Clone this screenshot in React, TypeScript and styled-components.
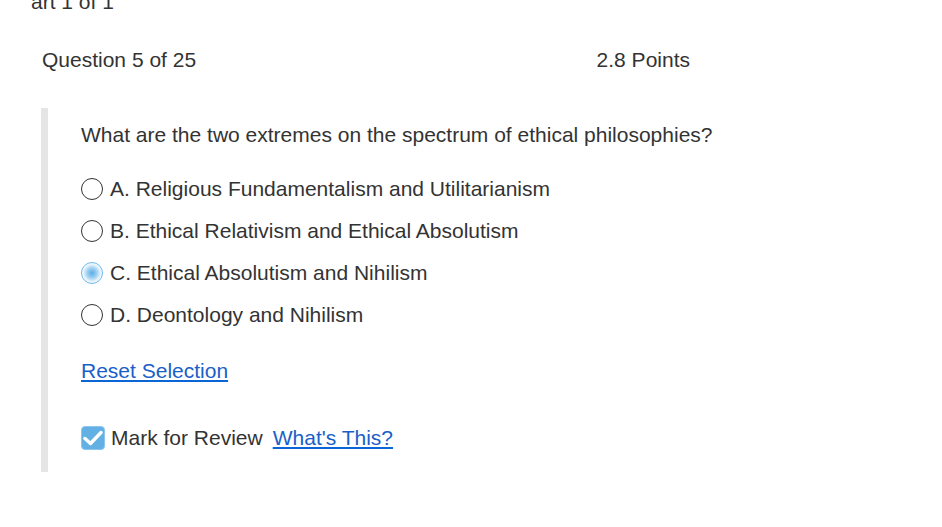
import { FC } from "react";
import styled, { createGlobalStyle } from "styled-components";

const GlobalStyle = createGlobalStyle`
  html, body {
    margin: 0;
    padding: 0;
    background: #fff;
    overflow: hidden;
  }
  body {
    font-family: "Liberation Sans", Arial, sans-serif;
    color: #333;
  }
`;

const options = [
  "A. Religious Fundamentalism and Utilitarianism",
  "B. Ethical Relativism and Ethical Absolutism",
  "C. Ethical Absolutism and Nihilism",
  "D. Deontology and Nihilism",
];

const App: FC = () => {
  const selected = 2;
  return (
    <>
      <GlobalStyle />
      <SPage>
        <SPartTitle>art 1 of 1</SPartTitle>
        <SHeader>
          <span>Question 5 of 25</span>
          <span>2.8 Points</span>
        </SHeader>
        <SQuestionBox>
          <SPrompt>What are the two extremes on the spectrum of ethical philosophies?</SPrompt>
          <SOptions>
            {options.map((o, i) => (
              <SOption key={o}>
                <SRadio $checked={i === selected} />
                <span>{o}</span>
              </SOption>
            ))}
          </SOptions>
          <SResetLink href="#">Reset Selection</SResetLink>
          <SReview>
            <SCheck>
              <svg width="20" height="16" viewBox="0 0 20 16">
                <path d="M2 8.5 L7.5 13.5 L18 2.5" fill="none" stroke="#fff" strokeWidth="3.4" strokeLinecap="round" strokeLinejoin="round" />
              </svg>
            </SCheck>
            <span>Mark for Review</span>
            <SLink href="#">What's This?</SLink>
          </SReview>
        </SQuestionBox>
      </SPage>
    </>
  );
};

export default App;

const SPage = styled.div`
  width: 942px;
  height: 527px;
  box-sizing: border-box;
  padding-left: 42px;
`;

const SPartTitle = styled.h1`
  margin: -10px 0 0 -11px;
  font-size: 21px;
  font-weight: normal;
  line-height: 24px;
  color: #333;
`;

const SHeader = styled.div`
  display: flex;
  justify-content: space-between;
  width: 648px;
  margin-top: 34px;
  font-size: 21px;
  line-height: 24px;
`;

const SQuestionBox = styled.div`
  margin-top: 36px;
  border-left: 7px solid #e5e5e5;
  margin-left: -1px;
  padding: 15px 0 18px 33px;
  display: flex;
  flex-direction: column;
  align-items: flex-start;
  height: 331px;
`;

const SPrompt = styled.p`
  margin: 0;
  font-size: 21px;
  line-height: 24px;
`;

const SOptions = styled.div`
  display: flex;
  flex-direction: column;
  gap: 18px;
  margin-top: 30px;
`;

const SOption = styled.label`
  display: flex;
  align-items: center;
  gap: 7px;
  font-size: 21px;
  line-height: 24px;
`;

const SRadio = styled.span<{ $checked: boolean }>`
  width: 20px;
  height: 20px;
  border-radius: 50%;
  border: 1px solid ${(p) => (p.$checked ? "#6db8ec" : "#333")};
  background: ${(p) =>
    p.$checked
      ? "radial-gradient(circle, #5aaee6 0%, #9fd0f2 35%, #e6f3fc 60%, #fff 75%)"
      : "#fff"};
  flex: none;
`;

const SLink = styled.a`
  font-size: 21px;
  line-height: 24px;
  color: #1a5fc8;
  text-decoration: underline;
  text-decoration-color: #0a66d6;
`;

const SResetLink = styled(SLink)`
  margin-top: 32px;
`;

const SReview = styled.div`
  display: flex;
  align-items: center;
  gap: 6px;
  margin-top: 43px;
  font-size: 21px;
  line-height: 24px;
  & > a {
    margin-left: 4px;
  }
`;

const SCheck = styled.span`
  width: 22px;
  height: 22px;
  border: 1px solid #8cc6ee;
  border-radius: 4px;
  background: #62b0e4;
  display: flex;
  align-items: center;
  justify-content: center;
  flex: none;
`;
